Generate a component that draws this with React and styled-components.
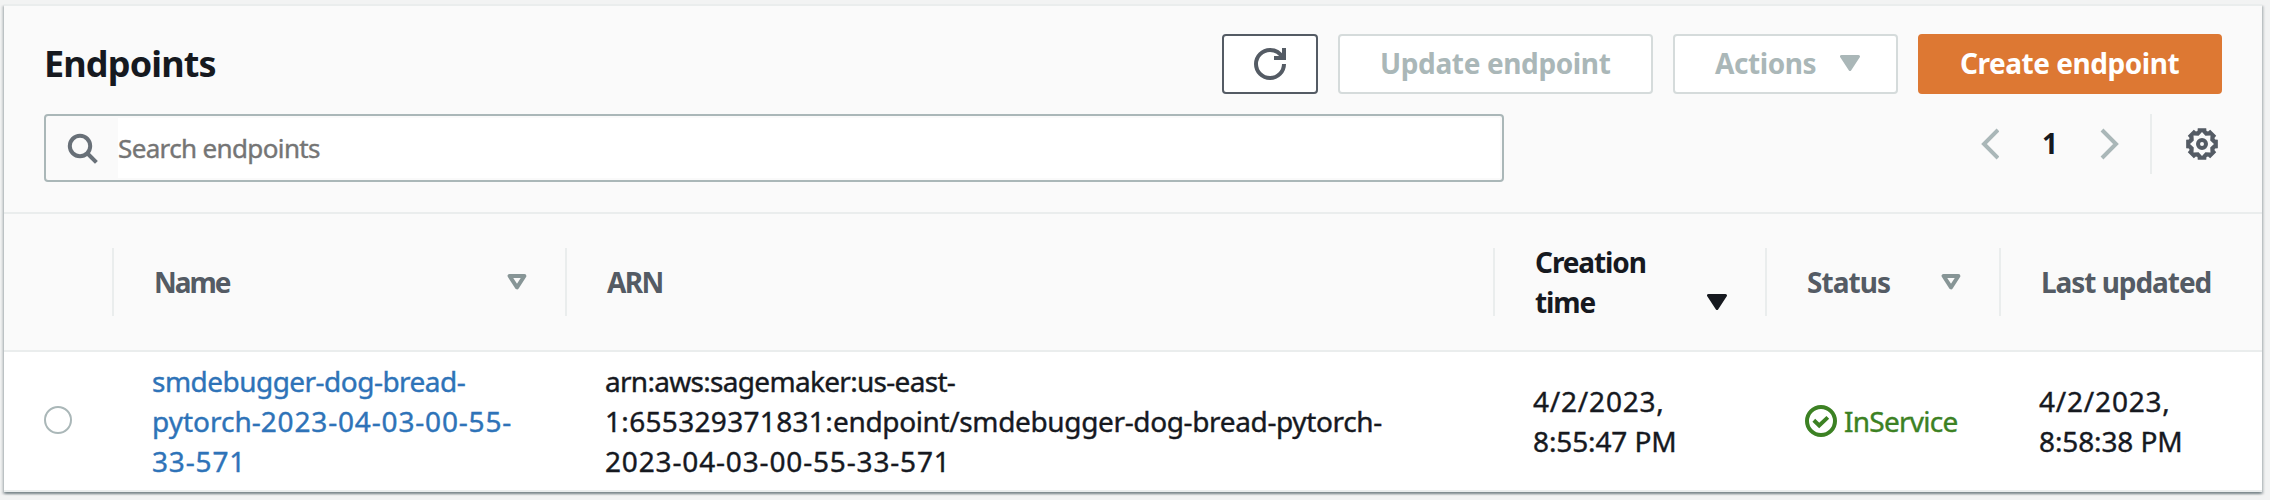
import React from "react";
import styled, { createGlobalStyle } from "styled-components";

const GlobalStyle = createGlobalStyle`
  *, *::before, *::after { box-sizing: border-box; }
  body {
    margin: 0;
    background: #f2f3f3;
    color: #16191f;
    font-family: "Noto Sans", "Open Sans", sans-serif;
    font-size: 28px;
    line-height: 40px;
  }
`;

const Page = styled.main`
  height: 500px;
  padding: 4px 8px 8px 4px;
  overflow: hidden;
`;

const Panel = styled.section`
  height: 488px;
  background: #fff;
  border-top: 2px solid #eaeded;
  box-shadow:
    0 2px 2px 0 rgba(0, 28, 36, 0.3),
    2px 2px 2px 0 rgba(0, 28, 36, 0.15),
    -2px 2px 2px 0 rgba(0, 28, 36, 0.15);
`;

const PanelHeader = styled.header`
  height: 208px;
  padding: 28px 40px 0;
  background: #fafafa;
  border-bottom: 2px solid #eaeded;
`;

const TitleRow = styled.div`
  display: flex;
  justify-content: space-between;
  height: 60px;
`;

const Title = styled.h1`
  margin: 10px 0 0;
  font-size: 36px;
  line-height: 40px;
  font-weight: 700;
  letter-spacing: -0.85px;
`;

const Buttons = styled.div`
  display: flex;
  gap: 20px;
`;

const variants = {
  normal: "background: #fff; border-color: #545b64; color: #545b64;",
  disabled: "background: #fff; border-color: #d5dbdb; color: #aab7b8;",
  primary: "background: #dd7833; border-color: #dd7833; color: #fff;",
};

const Button = styled.button`
  display: flex;
  align-items: center;
  justify-content: ${(p) => p.$justify || "center"};
  width: ${(p) => p.$width}px;
  height: 60px;
  padding: 0 36px 2px 40px;
  border: 2px solid;
  border-radius: 4px;
  font: 700 28px/40px "Noto Sans", "Open Sans", sans-serif;
  letter-spacing: ${(p) => p.$track || 0}px;
  white-space: nowrap;
  ${(p) => variants[p.$variant]}
`;

const IconButton = styled(Button)`
  padding: 0;
`;

const FilterRow = styled.div`
  display: flex;
  justify-content: space-between;
  margin-top: 20px;
`;

const SearchBox = styled.label`
  display: flex;
  align-items: center;
  width: 1460px;
  height: 68px;
  padding: 2px 2px 2px 20px;
  border: 2px solid #aab7b8;
  border-radius: 4px;
`;

const SearchInput = styled.input`
  flex: 1;
  height: 60px;
  margin-left: 20px;
  padding: 0;
  border: 0;
  outline: 0;
  background: #fff;
  font: 400 26px/36px "Noto Sans", "Open Sans", sans-serif;
  letter-spacing: -0.64px;
  -webkit-text-stroke: 0.4px;
  &::placeholder { color: #757575; opacity: 1; }
`;

const Pagination = styled.nav`
  display: flex;
  align-items: center;
  height: 60px;
  padding-right: 4px;
`;

const PageNumber = styled.span`
  width: 101px;
  padding: 0 0 2px 43px;
  font-weight: 700;
`;

const Separator = styled.span`
  width: 2px;
  height: 60px;
  margin: 0 34px 0 31px;
  background: #eaeded;
`;

const Row = styled.div`
  display: grid;
  grid-template-columns: 110px 453px 928px 272px 234px 261px;
  align-items: center;
`;

const HeadRow = styled(Row)`
  height: 138px;
  background: #fafafa;
  border-bottom: 2px solid #eaeded;
`;

const HeadCell = styled.div`
  display: flex;
  align-items: center;
  height: 68px;
  padding: 0 38px 0 40px;
  border-right: 2px solid ${(p) => (p.$last ? "transparent" : "#eaeded")};
`;

const HeadContent = styled.div`
  display: flex;
  flex: 1;
  align-items: flex-end;
  justify-content: space-between;
  color: ${(p) => (p.$active ? "#16191f" : "#545b64")};
  font-weight: 700;
  & > svg { margin-bottom: 12px; }
`;

const HeadLabel = styled.span`
  white-space: nowrap;
  letter-spacing: ${(p) => p.$track}px;
`;

const BodyRow = styled(Row)`
  height: 140px;
  border-bottom: 2px solid #eaeded;
`;

const Cell = styled.div`
  padding-left: 38px;
  -webkit-text-stroke: 0.4px;
`;

const RadioCell = styled.div`
  padding: 0 0 2px 40px;
  line-height: 0;
`;

const Radio = styled.span`
  display: inline-block;
  width: 28px;
  height: 28px;
  border: 2px solid #aab7b8;
  border-radius: 50%;
  background: #fff;
`;

const Line = styled.span`
  display: block;
  white-space: nowrap;
`;

const Run = styled.span`
  letter-spacing: ${(p) => p.$track}px;
`;

const EndpointLink = styled.a`
  color: #2e73b8;
  text-decoration: none;
`;

const Status = styled.div`
  display: flex;
  align-items: center;
  gap: 7px;
  color: #3c8123;
`;

const RefreshIcon = () => (
  <svg width="32" height="32" viewBox="0 0 16 16" fill="none" stroke="currentColor" strokeWidth="2">
    <path d="M15 8c0 3.87-3.13 7-7 7s-7-3.13-7-7 3.13-7 7-7c2.79 0 5.2 1.63 6.33 4" />
    <path d="M15 0v5h-5" />
  </svg>
);

const SearchIcon = () => (
  <svg width="32" height="32" viewBox="0 0 32 32" fill="none" stroke="#687078" strokeWidth="4">
    <circle cx="14" cy="14" r="10.2" />
    <path d="M21 21l9.4 9.4" />
  </svg>
);

const CaretIcon = ({ hollow }) => (
  <svg width="20" height="16" viewBox="0 0 20 16" strokeLinejoin="round">
    {hollow ? (
      <path d="M2.6 2h14.8L10 13.4z" fill="none" stroke="#879596" strokeWidth="4" />
    ) : (
      <path d="M1.5 1.5h17L10 14.5z" fill="currentColor" stroke="currentColor" strokeWidth="3" />
    )}
  </svg>
);

const ChevronIcon = ({ right }) => (
  <svg width="19" height="32" viewBox="0 0 19 32" fill="none" stroke="#aab7b8" strokeWidth="4">
    <path d={right ? "M2 2l14 14L2 30" : "M18 2L4 16l14 14"} />
  </svg>
);

const polar = (r, deg) => {
  const a = (deg * Math.PI) / 180;
  return `${(16 + r * Math.cos(a)).toFixed(2)} ${(16 + r * Math.sin(a)).toFixed(2)}`;
};
const teeth = [0, 45, 90, 135, 180, 225, 270, 315];
const gearOuter = teeth.flatMap((d) => [polar(16.4, d - 15), polar(16.4, d + 15), polar(13.8, d + 19), polar(13.8, d + 26)]);
const gearInner = teeth.flatMap((d) => [polar(12, d), polar(8.9, d + 22.5)]);

const GearIcon = () => (
  <svg width="32" height="32" viewBox="0 0 32 32" fill="#545b64">
    <path fillRule="evenodd" d={`M${gearOuter.join("L")}zM${gearInner.join("L")}z`} />
    <circle cx="16" cy="16" r="4" fill="none" stroke="#545b64" strokeWidth="4" />
  </svg>
);

const CheckIcon = () => (
  <svg width="32" height="32" viewBox="0 0 32 32" fill="none" stroke="currentColor" strokeWidth="4">
    <circle cx="16" cy="16" r="14" />
    <path d="M8.8 15.2l5.4 5.2 8.6-8" />
  </svg>
);

const columns = [
  { lines: ["Name"], track: -2.0, sort: "none" },
  { lines: ["ARN"], track: -1.6 },
  { lines: ["Creation", "time"], track: -1.1, sort: "desc" },
  { lines: ["Status"], track: -0.94, sort: "none" },
  { lines: ["Last updated"], track: -1.05 },
];

// Each line is a list of [text, letter-spacing] runs.
const name = [
  [["smdebugger-dog-bread-", -0.53]],
  [["pytorch-", 0], ["2023-04-03-00-55-", 0.83]],
  [["33-571", 0.85]],
];
const arn = [
  [["arn:aws:sagemaker:us-east-", -0.7]],
  [["1:655329371831:", 0.32], ["endpoint/smdebugger-dog-bread-pytorch-", -0.36]],
  [["2023-04-03-00-55-33-571", 0.84]],
];
const created = [[["4/2/2023,", 0.8]], [["8:55:47 PM", -0.12]]];
const updated = [[["4/2/2023,", 0.8]], [["8:58:38 PM", -0.12]]];

const Lines = ({ lines }) =>
  lines.map((runs, i) => (
    <Line key={i}>
      {runs.map(([text, track]) => (
        <Run key={text} $track={track}>{text}</Run>
      ))}
    </Line>
  ));

export default function App() {
  return (
    <Page>
      <GlobalStyle />
      <Panel>
        <PanelHeader>
          <TitleRow>
            <Title>Endpoints</Title>
            <Buttons>
              <IconButton $variant="normal" $width={96} aria-label="Refresh"><RefreshIcon /></IconButton>
              <Button $variant="disabled" $width={315} $justify="flex-start" $track={-0.37}>Update endpoint</Button>
              <Button $variant="disabled" $width={225} $justify="space-between" $track={-0.41}>
                Actions
                <CaretIcon />
              </Button>
              <Button $variant="primary" $width={304} $justify="flex-start" $track={-0.46}>Create endpoint</Button>
            </Buttons>
          </TitleRow>
          <FilterRow>
            <SearchBox>
              <SearchIcon />
              <SearchInput placeholder="Search endpoints" />
            </SearchBox>
            <Pagination>
              <ChevronIcon />
              <PageNumber>1</PageNumber>
              <ChevronIcon right />
              <Separator />
              <GearIcon />
            </Pagination>
          </FilterRow>
        </PanelHeader>
        <HeadRow>
          <HeadCell />
          {columns.map((c, i) => (
            <HeadCell key={i} $last={i === columns.length - 1}>
              <HeadContent $active={c.sort === "desc"}>
                <HeadLabel $track={c.track}>
                  {c.lines.map((l) => <Line key={l}>{l}</Line>)}
                </HeadLabel>
                {c.sort && <CaretIcon hollow={c.sort === "none"} />}
              </HeadContent>
            </HeadCell>
          ))}
        </HeadRow>
        <BodyRow>
          <RadioCell><Radio /></RadioCell>
          <Cell><EndpointLink><Lines lines={name} /></EndpointLink></Cell>
          <Cell><Lines lines={arn} /></Cell>
          <Cell><Lines lines={created} /></Cell>
          <Cell><Status><CheckIcon /><Run $track={-0.74}>InService</Run></Status></Cell>
          <Cell><Lines lines={updated} /></Cell>
        </BodyRow>
      </Panel>
    </Page>
  );
}
